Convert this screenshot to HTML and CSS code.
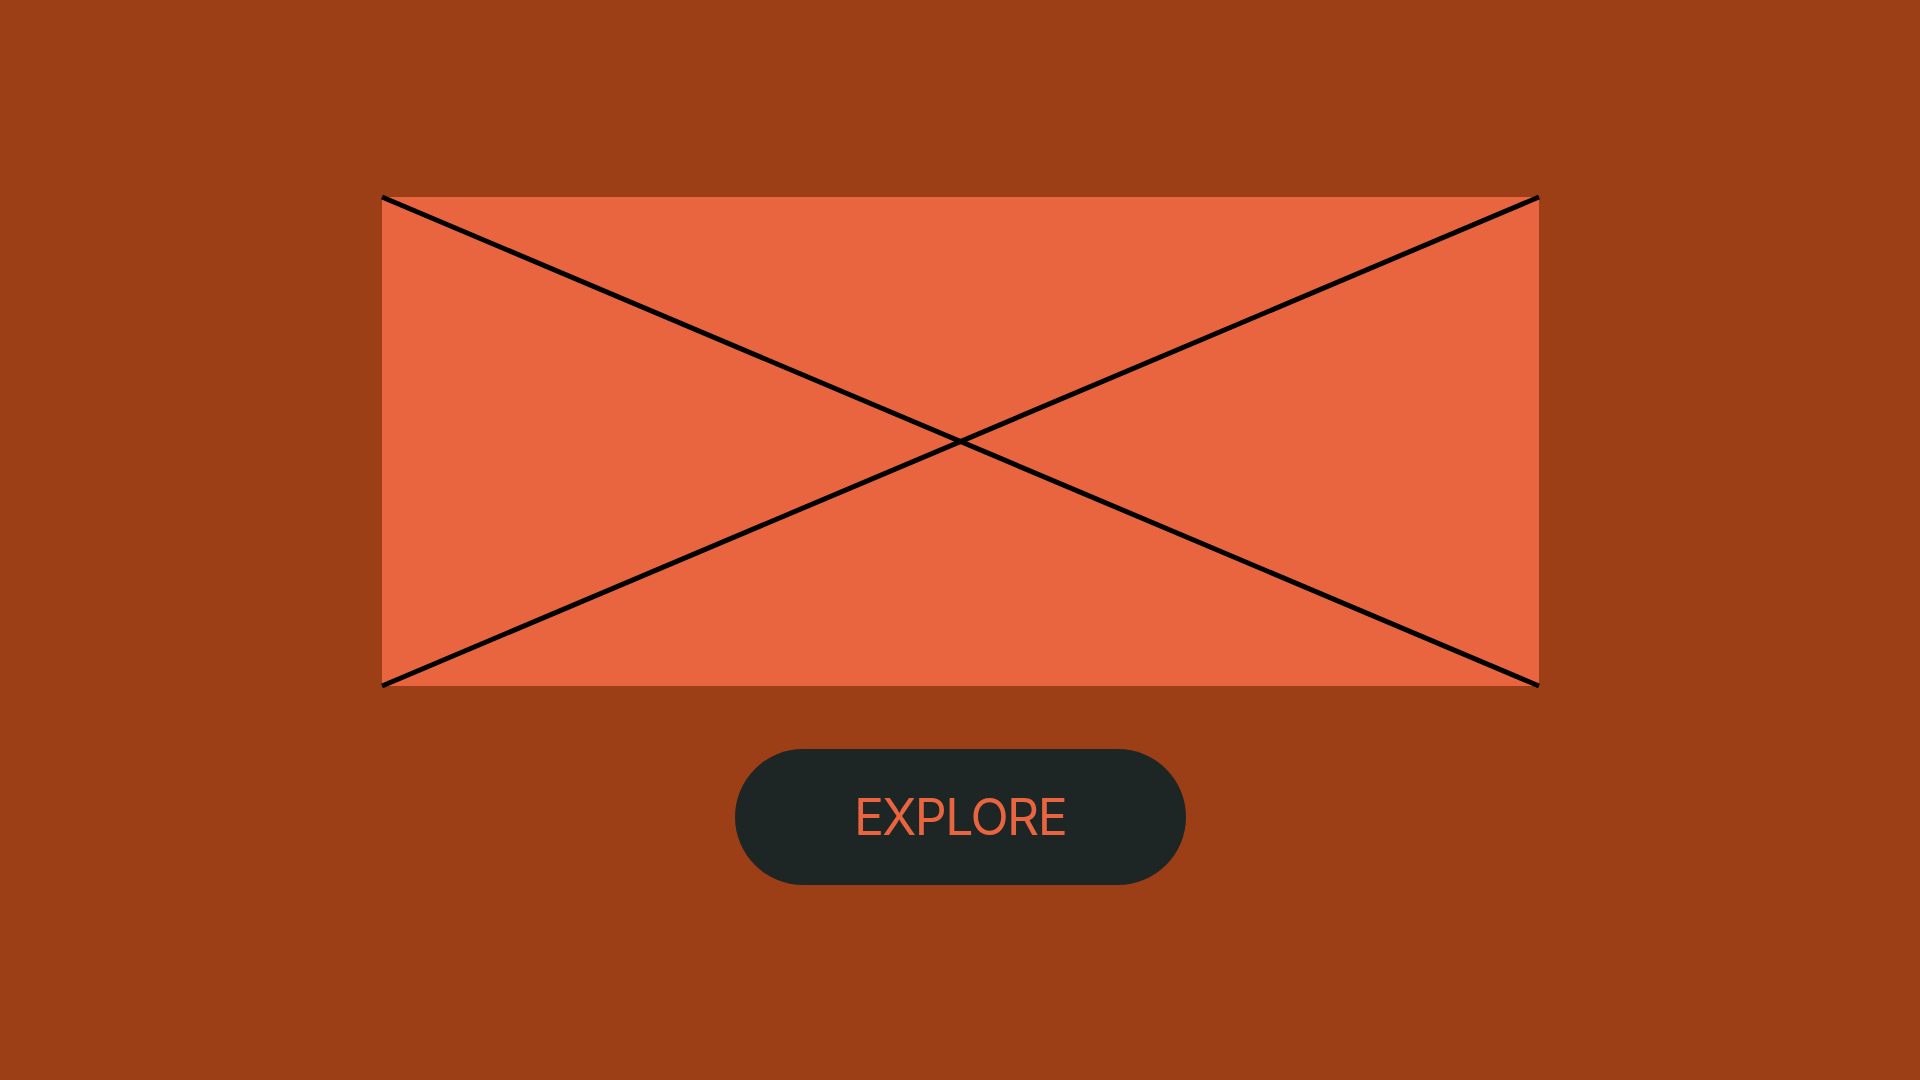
FILE: index.html
```html
<!DOCTYPE html>
<html lang="en">
<head>
<meta charset="utf-8">
<title>Explore</title>
<link rel="stylesheet" href="styles.css">
</head>
<body>
<main class="stage">
  <div class="placeholder">
    <svg class="cross" viewBox="0 0 1157 489" preserveAspectRatio="none">
      <line x1="0" y1="0" x2="1157" y2="489"/>
      <line x1="0" y1="489" x2="1157" y2="0"/>
    </svg>
  </div>
  <button class="explore">EXPLORE</button>
</main>
</body>
</html>
```
FILE: styles.css
```css
html, body {
  margin: 0;
  padding: 0;
  height: 100%;
}
body {
  background: #9c3f16;
  font-family: Inter, "Noto Sans", sans-serif;
}
.stage {
  height: 100vh;
  display: flex;
  flex-direction: column;
  align-items: center;
  justify-content: center;
  gap: 63px;
}
.placeholder {
  width: 1157px;
  height: 489px;
  margin-top: 1px;
  background: #e86540;
}
.cross {
  display: block;
  width: 100%;
  height: 100%;
  overflow: visible;
}
.cross line {
  stroke: #000;
  stroke-width: 5;
  vector-effect: non-scaling-stroke;
}
.explore {
  width: 451px;
  height: 136px;
  border: none;
  border-radius: 68px;
  background: #1e2625;
  color: #e86540;
  font-family: Inter, "Noto Sans", sans-serif;
  font-size: 50px;
  font-weight: 400;
  letter-spacing: -1.6px;
  padding: 0;
  cursor: pointer;
}
```
